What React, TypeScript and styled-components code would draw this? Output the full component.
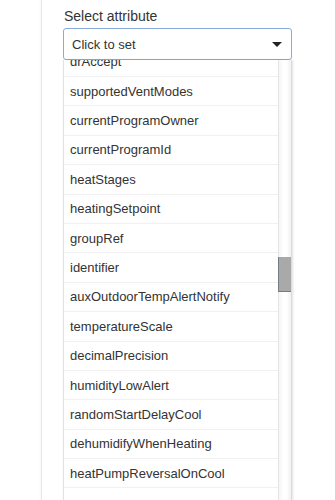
import React from 'react';
import styled, {createGlobalStyle} from "styled-components";

const GlobalStyle = createGlobalStyle`
  html, body {
    margin: 0;
    padding: 0;
    background: #ffffff;
    font-family: "Liberation Sans", Arial, sans-serif;
    color: #333333;
  }
  * {
    box-sizing: border-box;
  }
`;

const Page = styled('div')`
  height: 500px;
  overflow: hidden;
  padding-left: 41px;
`;

const Panel = styled('div')`
  height: 100%;
  border-left: 1px solid #e9e9e9;
  box-shadow: -1px 0 2px rgba(0, 0, 0, 0.04);
  padding: 6px 0 0 21px;
  display: flex;
  flex-direction: column;
`;

const Label = styled('div')`
  font-size: 14px;
  line-height: 20px;
  color: #333333;
  margin-bottom: 2px;
  padding-left: 1px;
`;

const SelectBox = styled('div')`
  width: 229px;
  height: 32px;
  border: 1px solid #8aa9dc;
  border-radius: 3px;
  background: #ffffff;
  display: flex;
  align-items: center;
  justify-content: space-between;
  padding: 0 9px 0 8px;
  font-size: 13px;
  color: #333333;
`;

const Caret = styled('span')`
  width: 0;
  height: 0;
  border-left: 5px solid transparent;
  border-right: 5px solid transparent;
  border-top: 5px solid #222222;
  margin-top: 1px;
`;

const Dropdown = styled('div')`
  width: 229px;
  flex: 1;
  display: flex;
  overflow: hidden;
  border-left: 1px solid #e2e2e2;
  box-shadow: 1px 0 2px rgba(0, 0, 0, 0.12);
`;

const OptionList = styled('div')`
  flex: 1;
  overflow: hidden;
`;

const OptionScroll = styled('div')<{ $offset: number }>`
  margin-top: ${p => -p.$offset}px;
`;

const Option = styled('div')`
  height: 29.4px;
  display: flex;
  align-items: center;
  padding: 0 6px;
  border-bottom: 1px solid #f1f1f1;
  font-size: 13px;
  color: #333333;
  white-space: nowrap;
`;

const Track = styled('div')`
  position: relative;
  width: 14px;
  border-left: 1px solid #e4e4e4;
  border-right: 1px solid #dcdcdc;
  background: linear-gradient(to right, #f6f6f6, #ffffff 40%, #ffffff 60%, #f1f1f1);
`;

const Thumb = styled('div')`
  position: absolute;
  left: -1px;
  right: 0;
  background: #a9a9a9;
  border-left: 1px solid #767c87;
  border-bottom: 1px solid #767c87;
`;

const attributes = [
    'drAccept',
    'supportedVentModes',
    'currentProgramOwner',
    'currentProgramId',
    'heatStages',
    'heatingSetpoint',
    'groupRef',
    'identifier',
    'auxOutdoorTempAlertNotify',
    'temperatureScale',
    'decimalPrecision',
    'humidityLowAlert',
    'randomStartDelayCool',
    'dehumidifyWhenHeating',
    'heatPumpReversalOnCool',
];

const App = () => {
    return (
        <>
            <GlobalStyle/>
            <Page>
                <Panel>
                    <Label>Select attribute</Label>
                    <SelectBox>
                        <span>Click to set</span>
                        <Caret/>
                    </SelectBox>
                    <Dropdown>
                        <OptionList>
                            <OptionScroll $offset={12.4}>
                                {attributes.map(name => (
                                    <Option key={name}>{name}</Option>
                                ))}
                            </OptionScroll>
                        </OptionList>
                        <Track>
                            <Thumb style={{top: 197, height: 35}}/>
                        </Track>
                    </Dropdown>
                </Panel>
            </Page>
        </>
    );
};

export default App;
